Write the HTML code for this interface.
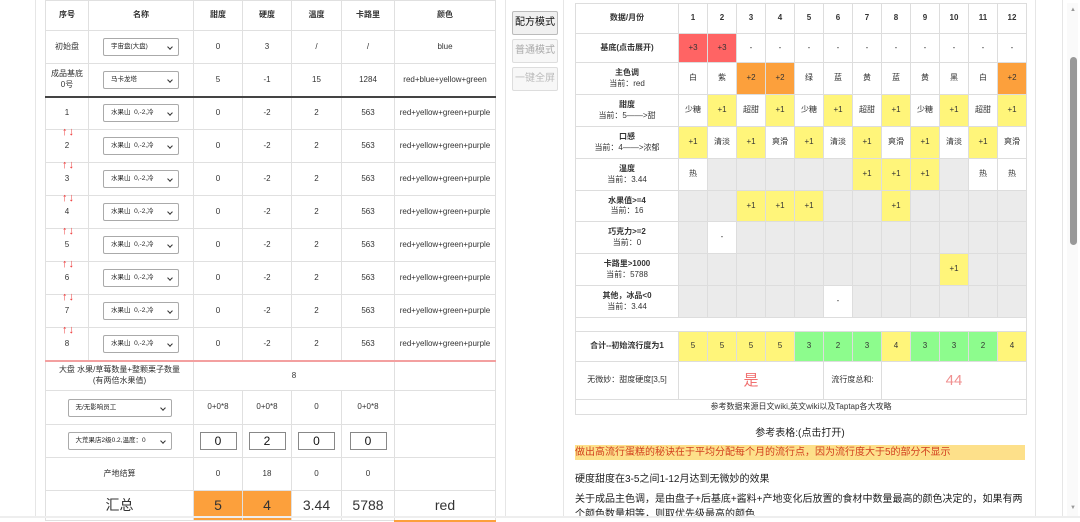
<!DOCTYPE html>
<html><head><meta charset="utf-8"><style>
*{box-sizing:border-box;margin:0;padding:0}
body{width:1080px;height:518px;overflow:hidden;background:#fff;font-family:"Liberation Sans","Noto Sans CJK SC",sans-serif;color:#333;position:relative}
.vl{position:absolute;top:0;height:518px;width:1px;background:#e6e6e6}
table{border-collapse:collapse;table-layout:fixed;position:absolute}
td{border:1px solid #e0e0e0;text-align:center;vertical-align:middle;font-size:8px;line-height:1.3;overflow:visible}
#L{left:45px;top:0;width:450px}
#L tr{height:33px}
#L tr.h{height:30px}
#L .b td{font-weight:bold}
.sel{display:inline-block;width:76px;height:18px;border:1px solid #aaa;border-radius:2px;font-size:6.5px;text-align:left;padding:4px 0 0 7px;position:relative;background:#fff;color:#222}
.sel:after{content:"";position:absolute;right:6px;top:6px;width:3px;height:3px;border-right:1px solid #333;border-bottom:1px solid #333;transform:rotate(45deg)}
.sel.w{width:104px}
.arr{position:absolute;left:16px;bottom:-10px;color:#e33;font-size:11px;letter-spacing:1px}
.inp{display:inline-block;width:37px;height:18px;border:1px solid #888;font-size:12px;line-height:16px;color:#111}
#R{left:575px;top:3px;width:451px}
#R td{border-color:#ddd}
.r{background:#ff6464}.o{background:#fca03c}.y{background:#fff57a}.g{background:#8dfc8d}.e{background:#ebebeb}
.lab{font-weight:bold}
.btn{position:absolute;left:512px;width:46px;height:24px;border:1px solid #bbb;border-radius:2px;font-size:10px;text-align:center;line-height:22px;background:#f0f0f0}
</style></head><body>
<div class="vl" style="left:35px"></div>
<div class="vl" style="left:505px"></div>
<div class="vl" style="left:563px"></div>
<div class="vl" style="left:1035px"></div>
<div class="vl" style="left:1062px"></div>

<table id="L">
<colgroup><col style="width:43px"><col style="width:105px"><col style="width:49px"><col style="width:49px"><col style="width:50px"><col style="width:53px"><col style="width:101px"></colgroup>
<tr class="h b"><td>序号</td><td>名称</td><td>甜度</td><td>硬度</td><td>温度</td><td>卡路里</td><td>颜色</td></tr>
<tr><td>初始盘</td><td><span class="sel">宇宙盘(大盘)</span></td><td>0</td><td>3</td><td>/</td><td>/</td><td>blue</td></tr>
<tr style="border-bottom:2px solid #444"><td>成品基底<br>0号</td><td><span class="sel">马卡龙塔</span></td><td>5</td><td>-1</td><td>15</td><td>1284</td><td>red+blue+yellow+green</td></tr>
<tr><td style="position:relative">1<span class="arr">↑↓</span></td><td><span class="sel">水果山&nbsp; 0,-2,冷</span></td><td>0</td><td>-2</td><td>2</td><td>563</td><td>red+yellow+green+purple</td></tr>
<tr><td style="position:relative">2<span class="arr">↑↓</span></td><td><span class="sel">水果山&nbsp; 0,-2,冷</span></td><td>0</td><td>-2</td><td>2</td><td>563</td><td>red+yellow+green+purple</td></tr>
<tr><td style="position:relative">3<span class="arr">↑↓</span></td><td><span class="sel">水果山&nbsp; 0,-2,冷</span></td><td>0</td><td>-2</td><td>2</td><td>563</td><td>red+yellow+green+purple</td></tr>
<tr><td style="position:relative">4<span class="arr">↑↓</span></td><td><span class="sel">水果山&nbsp; 0,-2,冷</span></td><td>0</td><td>-2</td><td>2</td><td>563</td><td>red+yellow+green+purple</td></tr>
<tr><td style="position:relative">5<span class="arr">↑↓</span></td><td><span class="sel">水果山&nbsp; 0,-2,冷</span></td><td>0</td><td>-2</td><td>2</td><td>563</td><td>red+yellow+green+purple</td></tr>
<tr><td style="position:relative">6<span class="arr">↑↓</span></td><td><span class="sel">水果山&nbsp; 0,-2,冷</span></td><td>0</td><td>-2</td><td>2</td><td>563</td><td>red+yellow+green+purple</td></tr>
<tr><td style="position:relative">7<span class="arr">↑↓</span></td><td><span class="sel">水果山&nbsp; 0,-2,冷</span></td><td>0</td><td>-2</td><td>2</td><td>563</td><td>red+yellow+green+purple</td></tr>
<tr style="border-bottom:2px solid #f3a0a0"><td>8</td><td><span class="sel">水果山&nbsp; 0,-2,冷</span></td><td>0</td><td>-2</td><td>2</td><td>563</td><td>red+yellow+green+purple</td></tr>
<tr style="height:30px"><td colspan="2">大盘 水果/草莓数量+整颗栗子数量<br>(有两倍水果值)</td><td colspan="4">8</td><td></td></tr>
<tr style="height:34px"><td colspan="2"><span class="sel w">无/无影响员工</span></td><td>0+0*8</td><td>0+0*8</td><td>0</td><td>0+0*8</td><td></td></tr>
<tr><td colspan="2"><span class="sel w">大荒果店2级0.2,温度：0</span></td><td><span class="inp">0</span></td><td><span class="inp">2</span></td><td><span class="inp">0</span></td><td><span class="inp">0</span></td><td></td></tr>
<tr><td colspan="2">产地结算</td><td>0</td><td>18</td><td>0</td><td>0</td><td></td></tr>
<tr style="height:30px;font-size:14px"><td colspan="2" style="font-size:14px">汇总</td><td class="o" style="font-size:14px">5</td><td class="o" style="font-size:14px">4</td><td style="font-size:14px">3.44</td><td style="font-size:14px">5788</td><td style="font-size:14px;border-bottom:2px solid #fca03c">red</td></tr>
</table>

<div class="btn" style="top:11px;color:#111">配方模式</div>
<div class="btn" style="top:39px;color:#aaa;background:#f7f7f7;border-color:#ddd">普通模式</div>
<div class="btn" style="top:67px;color:#bbb;background:#f7f7f7;border-color:#ddd">一键全屏</div>

<table id="R">
<colgroup><col style="width:103px"><col span="12" style="width:29px"></colgroup>
<tr style="height:30px" class="lab"><td class="lab">数据/月份</td><td class="lab">1</td><td class="lab">2</td><td class="lab">3</td><td class="lab">4</td><td class="lab">5</td><td class="lab">6</td><td class="lab">7</td><td class="lab">8</td><td class="lab">9</td><td class="lab">10</td><td class="lab">11</td><td class="lab">12</td></tr>
<tr style="height:29px"><td class="lab">基底(点击展开)</td><td class="r">+3</td><td class="r">+3</td><td>-</td><td>-</td><td>-</td><td>-</td><td>-</td><td>-</td><td>-</td><td>-</td><td>-</td><td>-</td></tr>
<tr style="height:32px"><td><b>主色调</b><br>当前：red</td><td>白</td><td>紫</td><td class="o">+2</td><td class="o">+2</td><td>绿</td><td>蓝</td><td>黄</td><td>蓝</td><td>黄</td><td>黑</td><td>白</td><td class="o">+2</td></tr>
<tr style="height:32px"><td><b>甜度</b><br>当前：5——&gt;甜</td><td>少糖</td><td class="y">+1</td><td>超甜</td><td class="y">+1</td><td>少糖</td><td class="y">+1</td><td>超甜</td><td class="y">+1</td><td>少糖</td><td class="y">+1</td><td>超甜</td><td class="y">+1</td></tr>
<tr style="height:32px"><td><b>口感</b><br>当前：4——&gt;浓郁</td><td class="y">+1</td><td>清淡</td><td class="y">+1</td><td>爽滑</td><td class="y">+1</td><td>清淡</td><td class="y">+1</td><td>爽滑</td><td class="y">+1</td><td>清淡</td><td class="y">+1</td><td>爽滑</td></tr>
<tr style="height:32px"><td><b>温度</b><br>当前：3.44</td><td>热</td><td class="e"></td><td class="e"></td><td class="e"></td><td class="e"></td><td class="e"></td><td class="y">+1</td><td class="y">+1</td><td class="y">+1</td><td class="e"></td><td>热</td><td>热</td></tr>
<tr style="height:31px"><td><b>水果值&gt;=4</b><br>当前：16</td><td class="e"></td><td class="e"></td><td class="y">+1</td><td class="y">+1</td><td class="y">+1</td><td class="e"></td><td class="e"></td><td class="y">+1</td><td class="e"></td><td class="e"></td><td class="e"></td><td class="e"></td></tr>
<tr style="height:32px"><td><b>巧克力&gt;=2</b><br>当前：0</td><td class="e"></td><td>-</td><td class="e"></td><td class="e"></td><td class="e"></td><td class="e"></td><td class="e"></td><td class="e"></td><td class="e"></td><td class="e"></td><td class="e"></td><td class="e"></td></tr>
<tr style="height:32px"><td><b>卡路里&gt;1000</b><br>当前：5788</td><td class="e"></td><td class="e"></td><td class="e"></td><td class="e"></td><td class="e"></td><td class="e"></td><td class="e"></td><td class="e"></td><td class="e"></td><td class="y">+1</td><td class="e"></td><td class="e"></td></tr>
<tr style="height:32px"><td><b>其他，冰品&lt;0</b><br>当前：3.44</td><td class="e"></td><td class="e"></td><td class="e"></td><td class="e"></td><td class="e"></td><td>-</td><td class="e"></td><td class="e"></td><td class="e"></td><td class="e"></td><td class="e"></td><td class="e"></td></tr>
<tr style="height:14px"><td colspan="13"></td></tr>
<tr style="height:30px"><td class="lab">合计--初始流行度为1</td><td class="y">5</td><td class="y">5</td><td class="y">5</td><td class="y">5</td><td class="g">3</td><td class="g">2</td><td class="g">3</td><td class="y">4</td><td class="g">3</td><td class="g">3</td><td class="g">2</td><td class="y">4</td></tr>
<tr style="height:38px"><td>无微妙：甜度硬度[3,5]</td><td colspan="5" style="color:#f07070;font-size:15px">是</td><td colspan="2">流行度总和:</td><td colspan="5" style="color:#f09090;font-size:15px">44</td></tr>
<tr style="height:15px"><td colspan="13">参考数据来源日文wiki,英文wiki以及Taptap各大攻略</td></tr>
</table>

<div style="position:absolute;left:575px;top:424px;width:450px;text-align:center;font-size:10px;color:#222">参考表格:(点击打开)</div>
<div style="position:absolute;left:575px;top:445px;width:450px;height:15px;background:#fde08a;color:#d2401e;font-size:10px;line-height:15px">做出高流行蛋糕的秘诀在于平均分配每个月的流行点，因为流行度大于5的部分不显示</div>
<div style="position:absolute;left:575px;top:470px;font-size:10px;color:#222">硬度甜度在3-5之间1-12月达到无微妙的效果</div>
<div style="position:absolute;left:575px;top:492px;width:455px;font-size:10px;line-height:15px;color:#222">关于成品主色调，是由盘子+后基底+酱料+产地变化后放置的食材中数量最高的颜色决定的，如果有两个颜色数量相等，则取优先级最高的颜色</div>

<div style="position:absolute;left:1067px;top:3px;width:11px;height:515px;background:#fafafa"></div>
<div style="position:absolute;left:1070px;top:7px;color:#999;font-size:6px">▲</div>
<div style="position:absolute;left:1070px;top:57px;width:7px;height:188px;background:#999;border-radius:4px"></div>
<div style="position:absolute;left:1070px;top:505px;color:#999;font-size:6px">▼</div>
<div style="position:absolute;left:0;top:516px;width:1080px;height:2px;background:#eee"></div>
</body></html>
